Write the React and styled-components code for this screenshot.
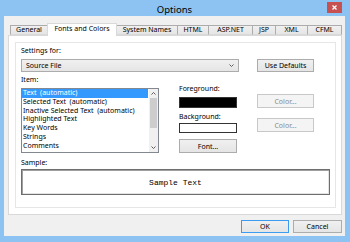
import React from "react";
import styled, { createGlobalStyle } from "styled-components";

const Global = createGlobalStyle`
  html, body { margin: 0; padding: 0; background: #fff; }
  * { box-sizing: border-box; }
`;

const FONT = `"Noto Sans", "Open Sans", sans-serif`;

const Win = styled.div`
  width: 350px;
  height: 242px;
  background: #8cc3f3;
  display: flex;
  flex-direction: column;
  padding: 0 5px 6px 4px;
  font-family: ${FONT};
  font-size: 7px;
  color: #000;
`;

const TitleBar = styled.div`
  height: 16px;
  display: grid;
  grid-template-columns: 1fr auto 1fr;
  align-items: center;
`;

const Title = styled.div`
  grid-column: 2;
  font-size: 9.5px;
  line-height: 12px;
  padding-top: 3px;
  color: #000;
`;

const Close = styled.div`
  grid-column: 3;
  justify-self: end;
  align-self: start;
  margin-top: 2px;
  margin-right: 3px;
  width: 15px;
  height: 11px;
  background: #c75050;
  display: flex;
  align-items: center;
  justify-content: center;
`;

const Client = styled.div`
  flex: 1;
  background: #f0f0f0;
  display: flex;
  flex-direction: column;
  padding: 7px 3px 0 4px;
`;

const Tabs = styled.div`
  height: 12px;
  display: flex;
  align-items: flex-end;
  padding-left: 2px;
  position: relative;
  z-index: 1;
`;

const Tab = styled.div`
  width: ${(p) => p.$w}px;
  height: ${(p) => (p.$active ? 13 : 10)}px;
  margin-left: ${(p) => (p.$first ? 0 : -1)}px;
  margin-bottom: ${(p) => (p.$active ? -1 : 0)}px;
  border: 1px solid ${(p) => (p.$active ? "#d9d9d9" : "#acacac")};
  border-bottom: ${(p) => (p.$active ? "none" : "1px solid #d9d9d9")};
  background: ${(p) =>
    p.$active ? "#fff" : "linear-gradient(#f0f0f0, #e5e5e5)"};
  display: flex;
  align-items: center;
  justify-content: center;
  padding-bottom: ${(p) => (p.$active ? 2 : 0)}px;
  font-size: 7px;
  line-height: 8px;
  white-space: nowrap;
  position: relative;
  z-index: ${(p) => (p.$active ? 2 : 1)};
`;

const Panel = styled.div`
  height: 180px;
  border: 1px solid #d9d9d9;
  background: #fff;
  padding: 6px 5px 6px 6px;
  display: flex;
`;

const Page = styled.div`
  flex: 1;
  border: 1px solid #e6e6e6;
  padding: 3px 5px 0 5px;
  display: flex;
  flex-direction: column;
`;

const Label = styled.div`
  height: 9px;
  line-height: 9px;
  font-size: 7px;
  white-space: nowrap;
  margin-top: ${(p) => p.$mt || 0}px;
`;

const Row = styled.div`
  display: flex;
  align-items: flex-start;
  margin-top: ${(p) => p.$mt || 0}px;
`;

const Combo = styled.div`
  width: 218px;
  height: 13px;
  border: 1px solid #acacac;
  background: linear-gradient(#f0f0f0, #e5e5e5);
  display: flex;
  align-items: center;
  justify-content: space-between;
  padding: 0 4px 0 4px;
  font-size: 7px;
`;

const Button = styled.div`
  width: ${(p) => p.$w}px;
  height: ${(p) => p.$h || 13}px;
  margin-left: ${(p) => p.$ml || 0}px;
  margin-top: ${(p) => p.$mt || 0}px;
  border: 1px solid
    ${(p) => (p.$disabled ? "#c8c8c8" : p.$default ? "#3c9cf0" : "#acacac")};
  background: ${(p) =>
    p.$disabled ? "#f4f4f4" : "linear-gradient(#f0f0f0, #e5e5e5)"};
  color: ${(p) => (p.$disabled ? "#8a8a8a" : "#000")};
  display: flex;
  align-items: center;
  justify-content: center;
  font-size: 7px;
  white-space: nowrap;
`;

const Columns = styled.div`
  display: flex;
  gap: 20px;
  margin-top: 3px;
`;

const Col = styled.div`
  width: ${(p) => p.$w}px;
  display: flex;
  flex-direction: column;
  padding-top: ${(p) => p.$pt || 0}px;
`;

const ListBox = styled.div`
  margin-top: 4px;
  width: 138px;
  height: 65px;
  border: 1px solid #828790;
  background: #fff;
  display: flex;
`;

const Items = styled.div`
  flex: 1;
  display: flex;
  flex-direction: column;
  padding-right: 1px;
`;

const Item = styled.div`
  height: 8.8px;
  line-height: 8.8px;
  padding-left: 1px;
  font-size: 7px;
  white-space: pre;
  background: ${(p) => (p.$sel ? "#3399ff" : "transparent")};
  color: ${(p) => (p.$sel ? "#fff" : "#000")};
`;

const ScrollBar = styled.div`
  width: 9px;
  background: #f0f0f0;
  display: flex;
  flex-direction: column;
  align-items: center;
`;

const ScrollArrow = styled.div`
  height: 9px;
  width: 100%;
  display: flex;
  align-items: center;
  justify-content: center;
`;

const Thumb = styled.div`
  width: 7px;
  height: 30px;
  background: #cdcdcd;
`;

const Swatch = styled.div`
  width: 58px;
  height: ${(p) => p.$h}px;
  margin-top: ${(p) => p.$mt || 0}px;
  background: ${(p) => p.$color};
  border: 1px solid #333;
`;

const SampleBox = styled.div`
  margin-top: 2px;
  width: 309px;
  height: 26px;
  border: 1px solid #6e6e6e;
  box-shadow: inset 1px 1px 0 #a0a0a0, inset -1px -1px 0 #e3e3e3;
  display: flex;
  align-items: center;
  justify-content: center;
  font-family: "Liberation Mono", "DejaVu Sans Mono", monospace;
  font-size: 8px;
`;

const Footer = styled.div`
  display: flex;
  justify-content: flex-end;
  gap: 4px;
  margin-top: 5px;
`;

const Chevron = ({ up }) => (
  <svg width="5" height="3" viewBox="0 0 5 3">
    <path
      d={up ? "M0.5 2.5 L2.5 0.5 L4.5 2.5" : "M0.5 0.5 L2.5 2.5 L4.5 0.5"}
      fill="none"
      stroke="#606060"
      strokeWidth="1"
    />
  </svg>
);

const tabs = [
  ["General", 38],
  ["Fonts and Colors", 70, true],
  ["System Names", 62],
  ["HTML", 32],
  ["ASP.NET", 45],
  ["JSP", 24],
  ["XML", 33],
  ["CFML", 35],
];

const items = [
  "Text  (automatic)",
  "Selected Text  (automatic)",
  "Inactive Selected Text  (automatic)",
  "Highlighted Text",
  "Key Words",
  "Strings",
  "Comments",
];

export default function App() {
  return (
    <>
      <Global />
      <Win>
        <TitleBar>
          <Title>Options</Title>
          <Close>
            <svg width="5" height="5" viewBox="0 0 5 5">
              <path d="M0.5 0.5 L4.5 4.5 M4.5 0.5 L0.5 4.5" stroke="#fff" strokeWidth="1.3" />
            </svg>
          </Close>
        </TitleBar>
        <Client>
          <Tabs>
            {tabs.map(([t, w, a], i) => (
              <Tab key={t} $w={w} $active={a} $first={i === 0}>
                {t}
              </Tab>
            ))}
          </Tabs>
          <Panel>
            <Page>
              <Label>Settings for:</Label>
              <Row $mt={4}>
                <Combo>
                  <span>Source File</span>
                  <Chevron />
                </Combo>
                <Button $w={57} $ml={18}>Use Defaults</Button>
              </Row>
              <Columns>
                <Col $w={138}>
                  <Label>Item:</Label>
                  <ListBox>
                    <Items>
                      {items.map((t, i) => (
                        <Item key={t} $sel={i === 0}>
                          {t}
                        </Item>
                      ))}
                    </Items>
                    <ScrollBar>
                      <ScrollArrow>
                        <Chevron up />
                      </ScrollArrow>
                      <Thumb />
                      <div style={{ flex: 1 }} />
                      <ScrollArrow>
                        <Chevron />
                      </ScrollArrow>
                    </ScrollBar>
                  </ListBox>
                </Col>
                <Col $w={58} $pt={9}>
                  <Label>Foreground:</Label>
                  <Swatch $h={11} $mt={4} $color="#000" />
                  <Label $mt={4}>Background:</Label>
                  <Swatch $h={10} $mt={2} $color="#fff" />
                  <Button $w={58} $h={14} $mt={6}>Font...</Button>
                </Col>
                <Col $w={57} $pt={19}>
                  <Button $w={57} $h={14} $disabled>Color...</Button>
                  <Button $w={57} $h={14} $mt={10} $disabled>Color...</Button>
                </Col>
              </Columns>
              <Label $mt={5}>Sample:</Label>
              <SampleBox>Sample Text</SampleBox>
            </Page>
          </Panel>
          <Footer>
            <Button $w={48} $default>OK</Button>
            <Button $w={49}>Cancel</Button>
          </Footer>
        </Client>
      </Win>
    </>
  );
}
